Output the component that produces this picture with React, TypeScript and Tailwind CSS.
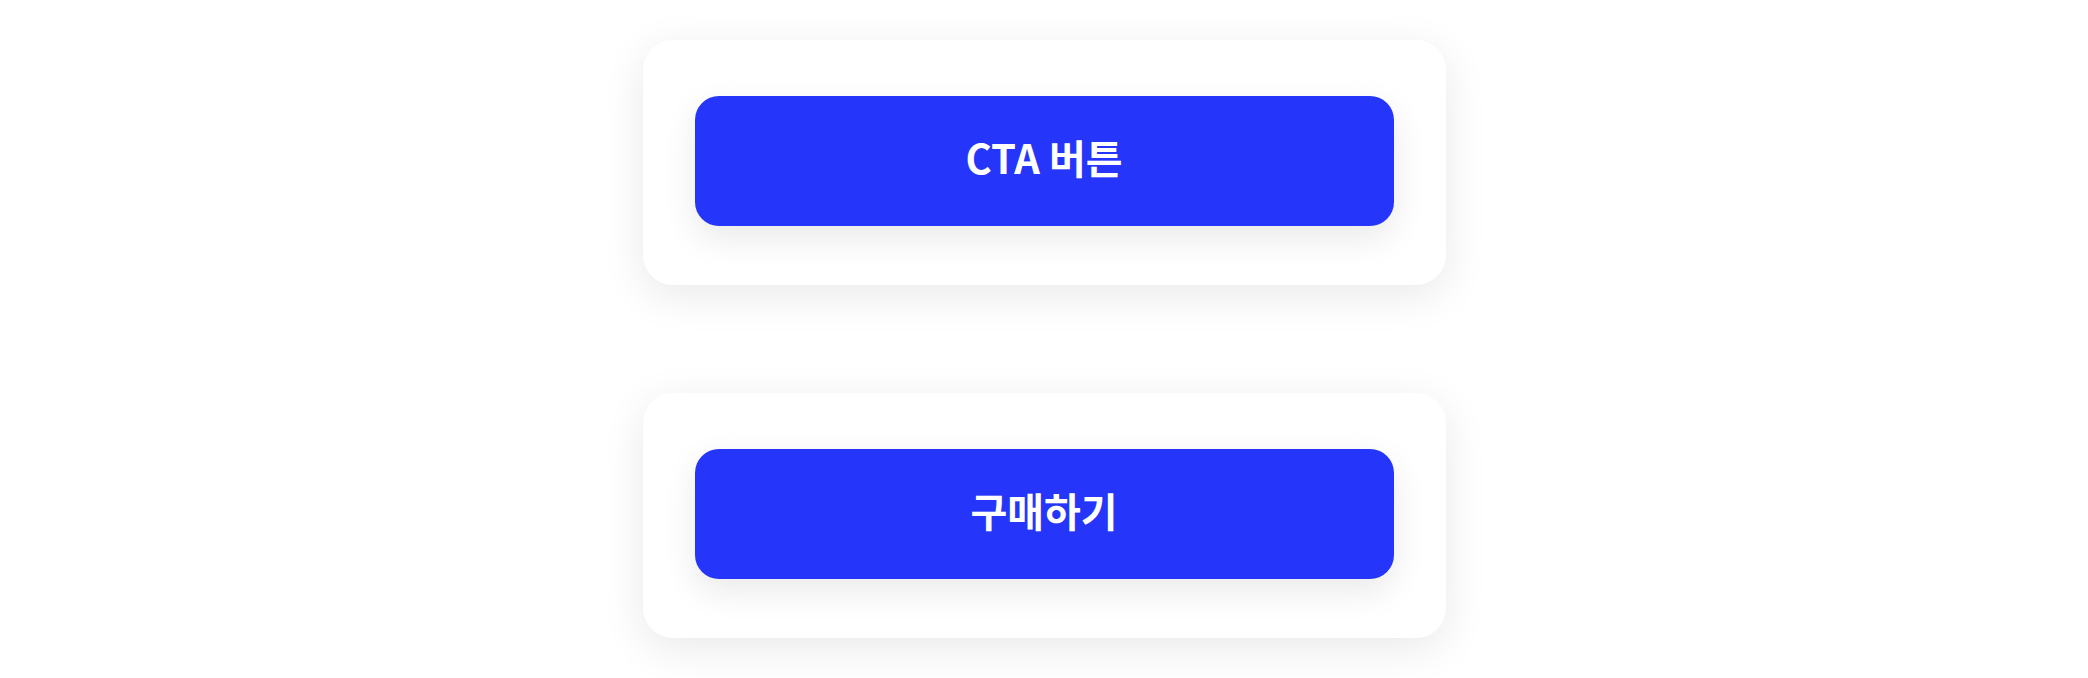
const buttons = ['CTA 버튼', '구매하기']

export default function App() {
  return (
    <div className="flex min-h-[678px] w-full flex-col items-center gap-[108px] bg-white pt-[40px] font-['Noto_Sans_CJK_KR','Noto_Sans',sans-serif]">
      {buttons.map((label) => (
        <div
          key={label}
          className="w-[803px] rounded-[30px] bg-white px-[52px] pt-[56px] pb-[59px] shadow-[0_10px_44px_rgba(0,0,0,0.09)]"
        >
          <button
            type="button"
            className="flex h-[130px] w-full items-center justify-center rounded-[24px] bg-[#2536fa] pb-[8px] text-[40px] leading-none font-bold text-white shadow-[0_12px_34px_rgba(0,0,0,0.09)]"
          >
            {label}
          </button>
        </div>
      ))}
    </div>
  )
}
